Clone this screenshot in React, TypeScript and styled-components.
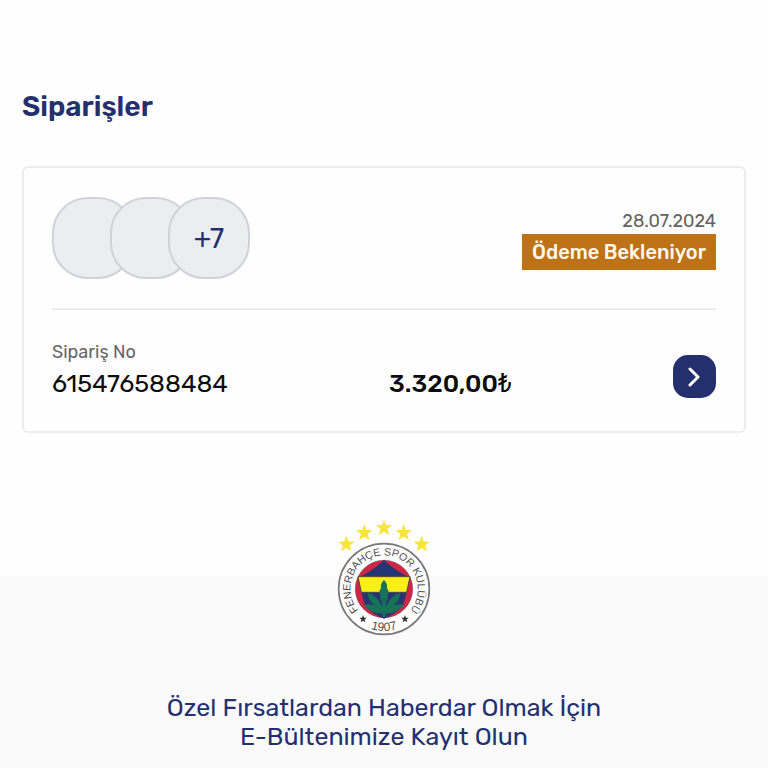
import React from "react";
import styled, { createGlobalStyle } from "styled-components";

const NAVY = "#24306e";

const GlobalStyle = createGlobalStyle`
  * {
    box-sizing: border-box;
  }
  body {
    margin: 0;
    background: #fefefe;
    color: #0b0b0b;
    font-family: Rubik, Roboto, "Liberation Sans", sans-serif;
  }
`;

const Page = styled.div`
  min-height: 100vh;
  display: flex;
  flex-direction: column;
`;

const Orders = styled.main`
  padding: 89px 22px 143px;
`;

const Title = styled.h1`
  margin: 0 0 41px;
  color: ${NAVY};
  font-size: 28px;
  line-height: 36px;
  font-weight: 600;
`;

const Card = styled.article`
  padding: 29px 28px 33px;
  border: 2px solid #ededee;
  border-radius: 6px;
`;

const CardTop = styled.div`
  display: flex;
  align-items: center;
  justify-content: space-between;
  padding-bottom: 29px;
  border-bottom: 2px solid #ebecee;
`;

const Products = styled.div`
  display: flex;
`;

const Product = styled.span`
  width: 82px;
  height: 82px;
  display: flex;
  align-items: center;
  justify-content: center;
  border: 2px solid #d0d2da;
  border-radius: 36px;
  background: #ecedf0;
  color: ${NAVY};
  font-size: 28px;
  & + & {
    margin-left: -24px;
  }
`;

const State = styled.div`
  display: flex;
  flex-direction: column;
  align-items: flex-end;
  padding-top: 2px;
`;

const OrderDate = styled.time`
  color: #626262;
  font-size: 18px;
  line-height: 26px;
`;

const Status = styled.span`
  padding: 0 10px;
  background: #bd7215;
  color: #fff8ec;
  font-size: 20px;
  line-height: 36px;
  font-weight: 500;
`;

const CardBottom = styled.div`
  display: flex;
  align-items: flex-end;
  justify-content: space-between;
  padding-top: 30px;
`;

const Label = styled.div`
  margin-bottom: 6px;
  color: #666;
  font-size: 18px;
  line-height: 24px;
`;

const Value = styled.div<{ $bold?: boolean }>`
  font-size: 25px;
  line-height: 28px;
  font-weight: ${props => (props.$bold ? 500 : 400)};
`;

const Currency = styled.span`
  font-weight: 400;
`;

const DetailButton = styled.button`
  width: 43px;
  height: 43px;
  display: flex;
  align-items: center;
  justify-content: center;
  padding: 0;
  border: 0;
  border-radius: 15px;
  background: ${NAVY};
  cursor: pointer;
`;

const Footer = styled.footer`
  flex: 1;
  display: flex;
  flex-direction: column;
  align-items: center;
  padding-bottom: 15px;
  background: #fafafa;
`;

const Logo = styled.svg`
  display: block;
  width: 120px;
  height: 130px;
  margin-top: -64px;
`;

const Newsletter = styled.p`
  margin: 51px 0 0;
  color: ${NAVY};
  font-size: 25px;
  line-height: 29px;
  text-align: center;
`;

const STARS = [
  [67, 97],
  [121, 63],
  [180, 48],
  [239, 63],
  [293, 97]
];

const starPoints = (cx: number, cy: number, r: number) =>
  Array.from({ length: 10 }, (_, i) => {
    const radius = i % 2 ? r * 0.42 : r;
    const angle = (Math.PI / 5) * i - Math.PI / 2;
    return `${cx + radius * Math.cos(angle)},${cy + radius * Math.sin(angle)}`;
  }).join(" ");

const ClubLogo = () => (
  <Logo viewBox="0 0 360 390" role="img" aria-label="Fenerbahçe Spor Kulübü">
    <defs>
      <path id="club-name" d="M180 332 A101 101 0 1 1 181 332" />
      <path id="club-year" d="M54 231 A126 126 0 0 0 306 231" />
    </defs>
    {STARS.map(([x, y]) => (
      <polygon key={x} points={starPoints(x, y, 26)} fill="#f7e638" />
    ))}
    <circle cx="180" cy="231" r="136" fill="#fff" stroke="#77777b" strokeWidth="5" />
    <circle cx="180" cy="231" r="86" fill="#cf2645" stroke="#8d4260" strokeWidth="2" />
    <path d="M180 143 Q198 164 248 193 H112 Q162 164 180 143Z" fill="#263574" />
    <path d="M111 240 H249 L237 279 Q214 308 180 320 Q146 308 123 279Z" fill="#263574" />
    <path d="M102 194 H258 L248 241 H112Z" fill="#f8ef17" stroke="#4b493c" strokeWidth="3" />
    <g fill="#167357">
      <path d="M180 204 Q192 216 189 229 Q197 237 190 250 Q195 260 186 268 L184 315 H176 L174 268 Q165 260 170 250 Q163 237 171 229 Q168 216 180 204Z" />
      <path d="M177 304 Q142 306 119 278 Q145 274 162 286 Q134 272 131 243 Q160 250 177 288Z" />
      <path d="M183 304 Q218 306 241 278 Q215 274 198 286 Q226 272 229 243 Q200 250 183 288Z" />
    </g>
    <g fill="#505156" fontFamily="Liberation Sans, sans-serif" fontSize="32" textAnchor="middle">
      <text>
        <textPath href="#club-name" startOffset="50%">
          FENERBAHÇE SPOR KULÜBÜ
        </textPath>
      </text>
      <text fontSize="36">
        <textPath href="#club-year" startOffset="50%">
          1907
        </textPath>
      </text>
    </g>
    <polygon points={starPoints(117, 321, 12)} fill="#333" />
    <polygon points={starPoints(243, 321, 12)} fill="#333" />
  </Logo>
);

const App: React.FC = () => (
  <>
    <GlobalStyle />
    <Page>
      <Orders>
        <Title>Siparişler</Title>
        <Card>
          <CardTop>
            <Products>
              <Product />
              <Product />
              <Product>+7</Product>
            </Products>
            <State>
              <OrderDate dateTime="2024-07-28">28.07.2024</OrderDate>
              <Status>Ödeme Bekleniyor</Status>
            </State>
          </CardTop>
          <CardBottom>
            <div>
              <Label>Sipariş No</Label>
              <Value>615476588484</Value>
            </div>
            <Value $bold={true}>
              3.320,00<Currency>₺</Currency>
            </Value>
            <DetailButton type="button" aria-label="Sipariş detayı">
              <svg width="16" height="20" viewBox="0 0 16 20" fill="none">
                <path
                  d="M4 2 L12 10 L4 18"
                  stroke="#fff"
                  strokeWidth="3"
                  strokeLinecap="round"
                  strokeLinejoin="round"
                />
              </svg>
            </DetailButton>
          </CardBottom>
        </Card>
      </Orders>
      <Footer>
        <ClubLogo />
        <Newsletter>
          Özel Fırsatlardan Haberdar Olmak İçin
          <br />
          E-Bültenimize Kayıt Olun
        </Newsletter>
      </Footer>
    </Page>
  </>
);

export default App;
